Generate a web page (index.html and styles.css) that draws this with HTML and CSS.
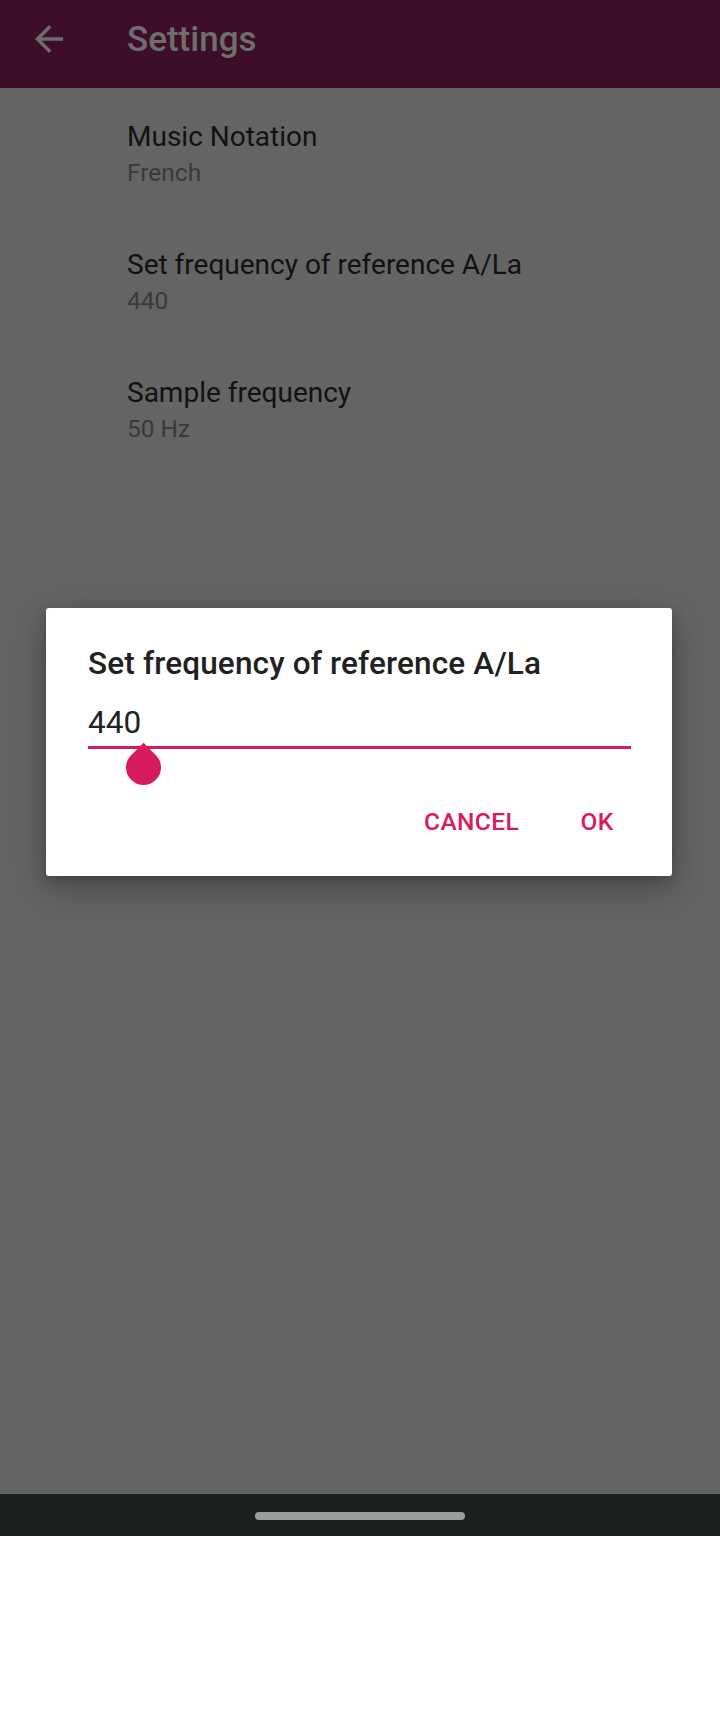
FILE: index.html
```html
<!DOCTYPE html>
<html>
<head>
<meta charset="utf-8">
<link rel="stylesheet" href="styles.css">
</head>
<body>
<div class="screen">
  <header class="appbar">
    <svg class="back" viewBox="0 0 24 24" width="42" height="42"><path d="M20 11H7.83l5.59-5.59L12 4l-8 8 8 8 1.41-1.41L7.83 13H20v-2z"/></svg>
    <h1 class="appbar-title">Settings</h1>
  </header>
  <main class="content">
    <div class="pref">
      <div class="pref-title">Music Notation</div>
      <div class="pref-summary">French</div>
    </div>
    <div class="pref">
      <div class="pref-title">Set frequency of reference A/La</div>
      <div class="pref-summary">440</div>
    </div>
    <div class="pref">
      <div class="pref-title">Sample frequency</div>
      <div class="pref-summary">50 Hz</div>
    </div>
  </main>
  <div class="dialog">
    <div class="dialog-title">Set frequency of reference A/La</div>
    <div class="field">
      <div class="field-text">440</div>
    </div>
    <div class="handle"></div>
    <div class="actions">
      <button class="btn">Cancel</button>
      <button class="btn">OK</button>
    </div>
  </div>
</div>
<div class="navbar"><div class="pill"></div></div>
<div class="below"></div>
</body>
</html>
```
FILE: styles.css
```css
html, body {
  margin: 0;
  padding: 0;
  background: #ffffff;
}
body {
  width: 720px;
  height: 1712px;
  font-family: Roboto, "Liberation Sans", sans-serif;
  overflow: hidden;
}
.screen {
  position: relative;
  height: 1494px;
  display: flex;
  flex-direction: column;
  background: #646464;
}
.appbar {
  height: 88px;
  box-sizing: border-box;
  padding: 0 0 10px 28px;
  display: flex;
  align-items: center;
  gap: 57px;
  background: #3e0e28;
}
.back {
  fill: #6c6c6c;
  flex: none;
}
.appbar-title {
  margin: 0;
  font-size: 35px;
  line-height: 41px;
  font-weight: 500;
  color: #6e6e6e;
}
.content {
  flex: 1;
  display: flex;
  flex-direction: column;
}
.pref {
  height: 128px;
  box-sizing: border-box;
  padding: 32px 16px 0 127px;
  display: flex;
  flex-direction: column;
  gap: 5px;
}
.pref-title {
  font-size: 28px;
  line-height: 33px;
  color: #121212;
}
.pref-summary {
  font-size: 24.5px;
  line-height: 29px;
  color: #393939;
}
.dialog {
  position: absolute;
  left: 46px;
  top: 608px;
  width: 626px;
  height: 268px;
  box-sizing: border-box;
  padding: 37px 41px 0 42px;
  background: #ffffff;
  border-radius: 3px;
  box-shadow: 0 12px 36px rgba(0, 0, 0, 0.28), 0 4px 12px rgba(0, 0, 0, 0.18);
  display: flex;
  flex-direction: column;
}
.dialog-title {
  font-size: 31.5px;
  line-height: 37px;
  font-weight: 500;
  letter-spacing: 0.005em;
  color: #212121;
}
.field {
  margin-top: 22px;
  padding-bottom: 5px;
  border-bottom: 3.5px solid #d81b60;
}
.field-text {
  font-size: 31.5px;
  line-height: 37px;
  color: #212121;
}
.handle {
  position: absolute;
  left: 80px;
  top: 142px;
  width: 35px;
  height: 35px;
  background: #d81b60;
  border-radius: 0 50% 50% 50%;
  transform: rotate(45deg);
}
.actions {
  margin-top: 41px;
  margin-right: -22px;
  display: flex;
  justify-content: flex-end;
  gap: 8px;
}
.btn {
  min-width: 112px;
  height: 63px;
  padding: 0 14px;
  border: 0;
  background: transparent;
  font-family: Roboto, "Liberation Sans", sans-serif;
  font-size: 24.5px;
  font-weight: 500;
  letter-spacing: 0.015em;
  text-transform: uppercase;
  color: #d81b60;
}
.navbar {
  height: 42px;
  background: #1c1f20;
  display: flex;
  align-items: center;
  justify-content: center;
}
.pill {
  width: 210px;
  height: 8px;
  margin-top: 2px;
  border-radius: 4px;
  background: #9a9c9b;
}
.below {
  height: 176px;
  background: #ffffff;
}
```
